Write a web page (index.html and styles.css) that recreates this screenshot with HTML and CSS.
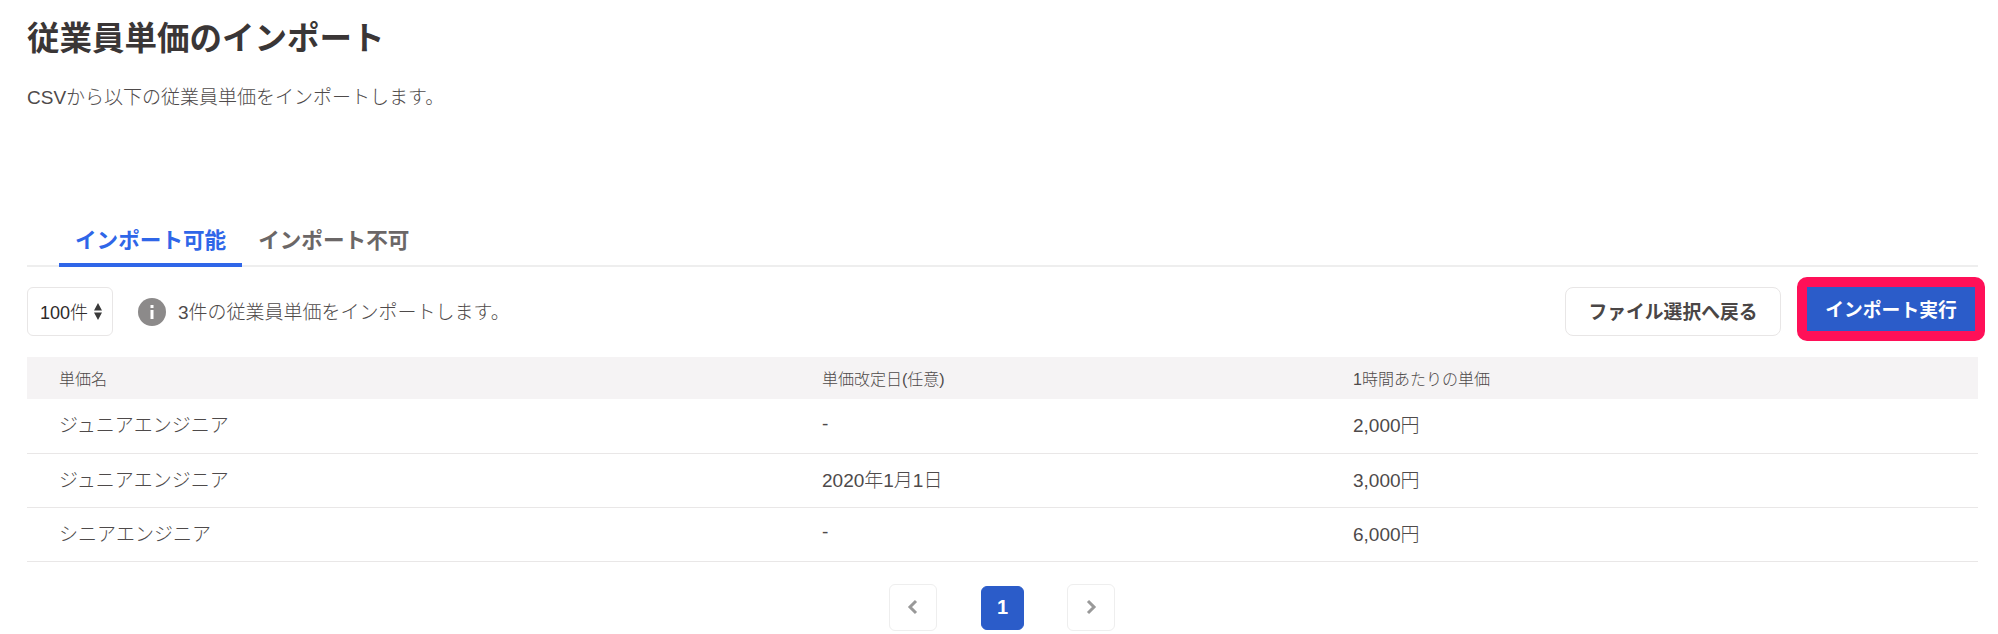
FILE: index.html
```html
<!DOCTYPE html>
<html lang="ja">
<head>
<meta charset="utf-8">
<title>従業員単価のインポート</title>
<link rel="stylesheet" href="styles.css">
</head>
<body>
<main class="page">
  <h1 class="title">従業員単価のインポート</h1>
  <p class="lead">CSVから以下の従業員単価をインポートします。</p>
  <nav class="tabs">
    <a class="tab tab-active">インポート可能</a>
    <a class="tab">インポート不可</a>
  </nav>
  <div class="toolbar">
    <div class="select">100件
      <svg class="updown" width="8" height="17" viewBox="0 0 8 17"><path d="M4 0 8 7.5H0zM0 9.5h8L4 17z" fill="#3a3a3a"/></svg>
    </div>
    <svg class="info" width="28" height="28" viewBox="0 0 28 28"><circle cx="14" cy="14" r="14" fill="#8c8a8a"/><rect x="12.5" y="12" width="3" height="9" fill="#fff"/><rect x="12.5" y="7" width="3" height="3" fill="#fff"/></svg>
    <span class="notice">3件の従業員単価をインポートします。</span>
    <button class="btn btn-back">ファイル選択へ戻る</button>
    <button class="btn btn-run">インポート実行</button>
  </div>
  <table class="grid">
    <thead>
      <tr><th class="c1">単価名</th><th class="c2">単価改定日(任意)</th><th>1時間あたりの単価</th></tr>
    </thead>
    <tbody>
      <tr><td>ジュニアエンジニア</td><td>-</td><td>2,000円</td></tr>
      <tr><td>ジュニアエンジニア</td><td>2020年1月1日</td><td>3,000円</td></tr>
      <tr><td>シニアエンジニア</td><td>-</td><td>6,000円</td></tr>
    </tbody>
  </table>
  <div class="pager">
    <span class="pg"><svg width="12" height="16" viewBox="0 0 12 16"><path d="M9 2 3 8l6 6" fill="none" stroke="#999" stroke-width="3"/></svg></span>
    <span class="pg pg-current">1</span>
    <span class="pg"><svg width="12" height="16" viewBox="0 0 12 16"><path d="m3 2 6 6-6 6" fill="none" stroke="#999" stroke-width="3"/></svg></span>
  </div>
</main>
</body>
</html>
```
FILE: styles.css
```css
* { box-sizing: border-box; }
html, body { margin: 0; background: #fff; height: 634px; overflow: hidden; }
body { font-family: "Liberation Sans", "Noto Sans CJK JP", sans-serif; color: #4e4a4a; }
.page { padding: 19px 20px 0 27px; }
.title { margin: 0; font-size: 32.5px; line-height: 40px; font-weight: 700; color: #3a3636; }
.lead { margin: 26px 0 0; font-size: 19px; line-height: 26px; font-weight: 300; }
.tabs { margin-top: 106px; height: 50px; display: flex; padding-left: 32px; border-bottom: 2px solid #eeeeee; }
.tab { height: 50px; padding: 0 16px; font-size: 21.6px; line-height: 48px; font-weight: 700; color: #6b6767; }
.tab-active { color: #2f66e8; border-bottom: 4px solid #2f66e8; }
.toolbar { margin-top: 20px; height: 49px; display: flex; align-items: center; }
.select { width: 86px; height: 49px; border: 1px solid #e8e6e6; border-radius: 6px; padding: 0 0 2px 12px; display: flex; align-items: center; gap: 6px; font-size: 18px; font-weight: 300; color: #2e2a2a; }
.updown { margin-top: 2px; }
.info { margin-left: 25px; }
.notice { margin-left: 12px; padding-bottom: 2px; font-size: 19px; font-weight: 300; }
.btn { font-family: inherit; font-size: 18.8px; font-weight: 700; cursor: pointer; padding: 0 0 2px; }
.btn-back { margin-left: auto; width: 216px; height: 49px; background: #fff; border: 1px solid #e8e6e6; border-radius: 8px; color: #4a4646; }
.btn-run { margin: -10px -7px -15px 16px; width: 188px; height: 64px; background: #2b5cc9; background-clip: padding-box; border: 10px solid #ff1058; border-radius: 10px; color: #fff; align-self: flex-start; }
.grid { margin-top: 21px; width: 100%; border-collapse: collapse; table-layout: fixed; }
.grid th { height: 42px; padding: 0 0 0 32px; background: #f5f3f4; text-align: left; font-size: 16px; font-weight: 300; }
.grid .c1 { width: 763px; }
.grid .c2 { width: 531px; }
.grid td { height: 54px; padding: 0 0 4px 32px; border-bottom: 1px solid #e9e7e7; font-size: 19px; font-weight: 300; }
.pager { margin-top: 22px; display: flex; padding-left: 862px; }
.pg { width: 48px; height: 47px; display: flex; align-items: center; justify-content: center; border: 1px solid #eeeeee; border-radius: 6px; }
.pg-current { margin: 2px 43px 0 44px; width: 43px; height: 44px; background: #2b5cc9; border-color: #2b5cc9; color: #fff; font-size: 20px; font-weight: 700; }
```
